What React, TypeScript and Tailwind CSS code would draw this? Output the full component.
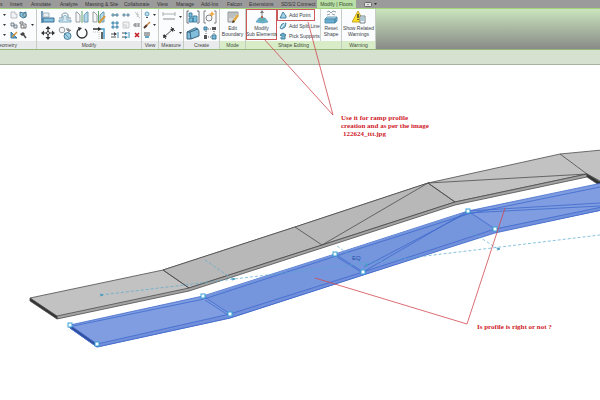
import type { ReactNode } from "react";
import { clsx } from "clsx";

const tabs = [
  { label: "s", width: "w-[10px]" },
  { label: "Insert", width: "w-[21px]" },
  { label: "Annotate", width: "w-[29px]" },
  { label: "Analyze", width: "w-[25px]" },
  { label: "Massing & Site", width: "w-[39px]" },
  { label: "Collaborate", width: "w-[33px]" },
  { label: "View", width: "w-[19px]" },
  { label: "Manage", width: "w-[25px]" },
  { label: "Add-Ins", width: "w-[26px]" },
  { label: "Falcon", width: "w-[22px]" },
  { label: "Extensions", width: "w-[32px]" },
  { label: "SDS/2 Connect", width: "w-[36px]" },
];

function Icon({ size = "lg", children }: { size?: "lg" | "sm"; children: ReactNode }) {
  return (
    <svg
      viewBox={size === "lg" ? "0 0 14 14" : "0 0 8 8"}
      className={clsx("block shrink-0", size === "lg" ? "h-3.5 w-3.5" : "h-2 w-2")}
      fill="none"
      strokeWidth="0.9"
      aria-hidden="true"
    >
      {children}
    </svg>
  );
}

function Tool({ label, children }: { label: string; children: ReactNode }) {
  return (
    <button type="button" aria-label={label} title={label} className="flex items-center justify-center">
      {children}
    </button>
  );
}

function Arrow({ label }: { label: string }) {
  return (
    <Tool label={label}>
      <svg viewBox="0 0 3 2" className="h-0.5 w-[3px]" aria-hidden="true">
        <path d="M0 0h3L1.5 2z" fill="#333" />
      </svg>
    </Tool>
  );
}

function Panel({
  title,
  width,
  green,
  children,
}: {
  title: string;
  width: string;
  green?: boolean;
  children: ReactNode;
}) {
  return (
    <section className={clsx("flex shrink-0 flex-col overflow-hidden border-r border-[#c5cbc5]", width)}>
      <div className="h-8 bg-[#fafcfd]">{children}</div>
      <h2
        className={clsx(
          "flex h-2 items-center justify-center text-[5px] leading-none whitespace-nowrap",
          green ? "bg-[#d7ecc7] text-[#42513b]" : "bg-[#e8eaeb] text-[#444]"
        )}
      >
        {title}
      </h2>
    </section>
  );
}

/* ---------- ribbon panels ---------- */

// scrolled partly out of the window on the left
function GeometryPanel() {
  return (
    <Panel title="Geometry" width="-ml-6 w-[61px]">
      <div className="grid h-full grid-cols-[9px_9px_10px_8px] grid-rows-3 items-center justify-end py-px">
        <Arrow label="Cope options" />
        <Tool label="Cope">
          <Icon size="sm"><path d="M1 1h4v2h2v4H1z" fill="#f2f3f4" stroke="#b3b7ba" /></Icon>
        </Tool>
        <Tool label="Wall opening">
          <Icon size="sm"><path d="m1 1 3 1 3-1v5L4 7 1 5z" fill="#8ec6df" stroke="#3b6d89" /><path d="M4 3h3v2H4z" fill="#fff" stroke="#3b6d89" /></Icon>
        </Tool>
        <span />
        <Arrow label="Cut options" />
        <Tool label="Cut geometry">
          <Icon size="sm"><path d="M1 2h3v3H1zM4 4h3v3H4z" fill="#dce5ea" stroke="#6b7b84" /></Icon>
        </Tool>
        <Tool label="Split face">
          <Icon size="sm"><path d="M1 1h3v2H1zM2 4h3v3H2zM5 3h2v4H5" fill="#fff" stroke="#666" /></Icon>
        </Tool>
        <Arrow label="Split face options" />
        <Arrow label="Join options" />
        <Tool label="Paint">
          <Icon size="sm"><path d="M1 1v6h6z" fill="#5fa6d2" stroke="#306f9a" /><path d="m2 6 5-5" stroke="#db9232" strokeWidth="1.5" /></Icon>
        </Tool>
        <Tool label="Demolish">
          <Icon size="sm"><path d="m1 3 3-2 2 2-3 2z" fill="#444" /><path d="m4 3 3 4" stroke="#444" strokeWidth="1.4" /></Icon>
        </Tool>
      </div>
    </Panel>
  );
}

function ModifyPanel() {
  return (
    <Panel title="Modify" width="w-[105px]">
      <div className="flex h-full items-center gap-0.5 pl-0.5">
        <div className="grid grid-cols-[17px_17px_17px_17px] grid-rows-[16px_16px]">
          <Tool label="Align">
            <Icon><path d="M1 1v12" stroke="#346f98" strokeWidth="1.4" /><path d="M2 3h6v4H2z" fill="#e9f0f4" stroke="#9aabb5" /><path d="M2 8h11v4H2z" fill="#80bfde" stroke="#2f6488" /></Icon>
          </Tool>
          <Tool label="Offset">
            <Icon><path d="M1 8h3V6c-1-4 7-4 6 0v2h3" stroke="#6b8694" /><path d="M1 12h12v-2H9V7c0-2-4-2-4 0v3H1z" fill="#d4e9f2" stroke="#6a9db8" strokeWidth=".8" /></Icon>
          </Tool>
          <Tool label="Mirror - Pick Axis">
            <Icon><path d="M1 2h1l3 3v7H1z" fill="#f8f8f8" stroke="#8a9499" /><path d="M13 2h-1L9 5v7h4z" fill="#b4daea" stroke="#6292aa" /><path d="M7 1v12" stroke="#4c9a55" /></Icon>
          </Tool>
          <Tool label="Mirror - Draw Axis">
            <Icon><path d="M1 2h1l3 3v7H1z" fill="#f8f8f8" stroke="#8a9499" /><path d="M12 2h-1L8 5v7h4z" fill="#b4daea" stroke="#6292aa" /><path d="M6.5 1v12" stroke="#4c9a55" /><path d="m7 13 6-7" stroke="#d59a3d" strokeWidth="2" /></Icon>
          </Tool>
          <Tool label="Move">
            <Icon><path d="M7 2v10M2 7h10" stroke="#343434" strokeWidth="1.2" /><path d="m7 0 2.5 3h-5zM7 14l2.5-3h-5zM0 7l3-2.500v5zM14 7l-3-2.500v5z" fill="#343434" /><circle cx="7" cy="7" r="1.5" fill="#fff" stroke="#343434" /></Icon>
          </Tool>
          <Tool label="Copy">
            <Icon><circle cx="4" cy="4" r="2.8" fill="#f5f5f5" stroke="#87929a" /><circle cx="9.5" cy="10" r="3.5" fill="#9ed0e5" stroke="#3d7593" /><path d="M8 3h3v2m-2-1 2 1.500L13 4" stroke="#555" /><path d="m6 7 6 6" stroke="#5f8ea7" /></Icon>
          </Tool>
          <Tool label="Rotate">
            <Icon><path d="M4 3a5 5 0 1 0 6 0" stroke="#333" strokeWidth="1.3" /><path d="m3 1 4 1-3 3z" fill="#333" /></Icon>
          </Tool>
          <Tool label="Trim/Extend to Corner">
            <Icon><path d="M1 3h6M10 6v7" stroke="#333" strokeWidth="1.5" /><path d="m6 1 4 2-4 2z" fill="#333" /><path d="M12 13V3H9" stroke="#4a9ed0" strokeWidth="1.5" /><path d="M1 6h6v7" stroke="#b8bec1" strokeDasharray="1 1" /></Icon>
          </Tool>
        </div>
        <div className="grid h-full grid-cols-[11px_11px_11px] grid-rows-3 items-center py-px">
          <Tool label="Split Element">
            <Icon size="sm"><path d="M1 3h2v2H1zM5 3h2v2H5zM3 4h2" fill="#a3cee2" stroke="#5e899d" /></Icon>
          </Tool>
          <Tool label="Split with Gap">
            <Icon size="sm"><path d="M1 3h2v2H1zM5 3h2v2H5z" fill="#a3cee2" stroke="#5e899d" /></Icon>
          </Tool>
          <Tool label="Unpin">
            <Icon size="sm"><path d="m2 1 3 3M5 1 3 4m1 0 3 3M4 6l2-3" stroke="#c0c2c3" /></Icon>
          </Tool>
          <Tool label="Array">
            <Icon size="sm"><path d="M1 1h2v2H1zM5 1h2v2H5zM1 5h2v2H1zM5 5h2v2H5z" fill="#a9d6eb" stroke="#397fa5" /></Icon>
          </Tool>
          <Tool label="Scale">
            <Icon size="sm"><path d="M1 1h6v6H1zM1 4h3v3" fill="#f1f1f1" stroke="#c8c8c8" /></Icon>
          </Tool>
          <Tool label="Pin">
            <Icon size="sm"><path d="M2 2v4M6 2v4M2 3h4M2 5h4M0 4h2" stroke="#777" /></Icon>
          </Tool>
          <Tool label="Trim Single">
            <Icon size="sm"><path d="M0 3h4M0 6h5" stroke="#444" /><path d="m3 1 3 2-3 2z" fill="#444" /><path d="M7 1v6" stroke="#3385b0" /></Icon>
          </Tool>
          <Tool label="Trim Multiple">
            <Icon size="sm"><path d="M0 2h4M0 6h4" stroke="#444" /><path d="m3 1 3 1-3 2zM3 5l3 1-3 2z" fill="#3385b0" /><path d="M7 1v6" stroke="#3385b0" /></Icon>
          </Tool>
          <Tool label="Delete">
            <Icon size="sm"><path d="m2 2 4 4m0-4L2 6" stroke="#c3242b" strokeWidth="1.7" /></Icon>
          </Tool>
        </div>
      </div>
    </Panel>
  );
}

function ViewPanel() {
  return (
    <Panel title="View" width="w-[17px]">
      <div className="grid h-full grid-cols-[10px_5px] grid-rows-3 items-center py-px">
        <Tool label="Hide in View">
          <Icon size="sm"><circle cx="4" cy="3" r="2" fill="#bde4f3" stroke="#5796b4" /><path d="M3 6h2v1H3z" fill="#555" /></Icon>
        </Tool>
        <Arrow label="Hide options" />
        <Tool label="Override Graphics">
          <Icon size="sm"><path d="m1 7 3-3" stroke="#553527" strokeWidth="2" /><path d="m4 4 3-3" stroke="#c8873c" strokeWidth="1.5" /></Icon>
        </Tool>
        <Arrow label="Override options" />
        <Tool label="Linework">
          <Icon size="sm"><path d="M1 2h6M1 4h6" stroke="#444" /><path d="M2 6h4" stroke="#3189b2" strokeWidth="1.5" /></Icon>
        </Tool>
      </div>
    </Panel>
  );
}

function MeasurePanel() {
  return (
    <Panel title="Measure" width="w-[25px]">
      <div className="grid h-full grid-cols-[19px_4px] grid-rows-[16px_16px] items-center">
        <Tool label="Aligned Dimension">
          <Icon><path d="M1 4h12M1 2v4M13 2v4" stroke="#a5a8a9" /><path d="M1 9h12" stroke="#c1c5c6" strokeWidth="2" /></Icon>
        </Tool>
        <Arrow label="Measure options" />
        <Tool label="Measure Between Two References">
          <Icon><path d="m2 11 9-8M1 9l3 4M9 1l4 4" stroke="#333" /><path d="m1 12 1-4 3 3zM12 2 8 3l3 3z" fill="#333" /></Icon>
        </Tool>
        <Arrow label="Dimension options" />
      </div>
    </Panel>
  );
}

function CreatePanel() {
  return (
    <Panel title="Create" width="w-[36px]">
      <div className="grid h-full grid-cols-[17px_17px] grid-rows-[16px_16px] items-center justify-center">
        <Tool label="Create Assembly">
          <Icon><path d="M3 1H1v12h2M11 1h2v12h-2" stroke="#59636a" /><path d="M3 3h3v4H3zM3 8h4v4H3zM7 6h4v6H7z" fill="#79bfdc" stroke="#387997" /></Icon>
        </Tool>
        <Tool label="Create Parts">
          <Icon><path d="M3 1H1v12h2M11 1h2v12h-2" stroke="#777" /><circle cx="6" cy="8" r="3" fill="#f8f8f8" stroke="#777" /><path d="m9 1 1 2 2 1-2 1-1 2-1-2-2-1 2-1z" fill="#efad45" /></Icon>
        </Tool>
        <Tool label="Create Group">
          <Icon><path d="m1 6 8-4c3 0 4 2 4 4v4l-8 3H1z" fill="#80bedb" stroke="#315c77" /><path d="M1 6h3l1 7M4 6l8-3" stroke="#315c77" /></Icon>
        </Tool>
        <Tool label="Create Similar">
          <Icon><path d="M1 1h3v3H1zM9 9h4v4H9z" fill="#77bbda" stroke="#376f8f" /><path d="M1 9h3v4H1zM9 1h4v3H9z" fill="#555" /><path d="M5 3h3M3 5v3M5 11h3M11 5v3" stroke="#555" strokeDasharray="1 1" /></Icon>
        </Tool>
      </div>
    </Panel>
  );
}

function LargeButton({ lines, children, marked }: { lines: string[]; children: ReactNode; marked?: boolean }) {
  return (
    <button
      type="button"
      className={clsx(
        "flex h-[31px] w-full flex-col items-center border text-center text-[5px] leading-[6px] whitespace-nowrap text-[#3c4347]",
        marked ? "border-[#cc5a5a]" : "border-transparent"
      )}
    >
      {children}
      <span className="mt-px">
        {lines[0]}
        <br />
        {lines[1]}
      </span>
    </button>
  );
}

function ModePanel() {
  return (
    <Panel title="Mode" width="w-[26px]" green>
      <LargeButton lines={["Edit", "Boundary"]}>
        <Icon><path d="M2 2h10v3L7 12H2z" fill="#d5d8d8" stroke="#888f91" /><path d="M3 3h8M3 5h7M3 7h5" stroke="#9ba0a1" /><path d="m7 12 5-7" stroke="#dfa845" strokeWidth="2.5" /><path d="m6 13 1-3 2 2z" fill="#333" /></Icon>
      </LargeButton>
    </Panel>
  );
}

function SmallButton({ label, marked, children }: { label: string; marked?: boolean; children: ReactNode }) {
  return (
    <button
      type="button"
      className={clsx(
        "flex items-center gap-0.5 border pl-px text-[5px] leading-none whitespace-nowrap text-[#3c4347]",
        marked ? "w-[38px] border-[#cc5a5a]" : "w-full border-transparent"
      )}
    >
      {children}
      {label}
    </button>
  );
}

function ShapeEditingPanel() {
  return (
    <Panel title="Shape Editing" width="w-[96px]" green>
      <div className="flex h-full">
        <div className="w-[31px] shrink-0">
          <LargeButton lines={["Modify", "Sub Elements"]} marked>
            <Icon><path d="M1 12 4 8h6l3 4-5 1z" fill="#67b8d7" stroke="#3d7f9c" strokeWidth=".5" /><path d="m3 10 4-4 4 4-4 2z" fill="#63acb0" /><path d="M7 2v5" stroke="#777" /><path d="m7 0 2 3H5z" fill="#777" /><circle cx="7" cy="7" r="1" fill="#c94c3d" /></Icon>
          </LargeButton>
        </div>
        <div className="grid w-[44px] shrink-0 grid-rows-[12px_10px_10px] border-r border-[#d0d6cf]">
          <SmallButton label="Add Point" marked>
            <Icon size="sm"><path d="m1 7 3-6 3 4v2z" fill="#a3d3e6" stroke="#397998" /></Icon>
          </SmallButton>
          <SmallButton label="Add Split Line">
            <Icon size="sm"><path d="m1 6 2-4 4-1-1 4-3 2z" fill="#8dc5dd" stroke="#397998" /><path d="m2 6 4-5" stroke="#fff" /></Icon>
          </SmallButton>
          <SmallButton label="Pick Supports">
            <Icon size="sm"><path d="m1 3 3-2 3 2-3 2z" fill="#65adca" stroke="#397998" /><path d="M2 5v2h4V4" fill="#7eb6cb" stroke="#397998" /></Icon>
          </SmallButton>
        </div>
        <div className="min-w-0 flex-1">
          <LargeButton lines={["Reset", "Shape"]}>
            <Icon><path d="m1 9 2-2h10l-2 2z" fill="#b9ddec" stroke="#6499b3" /><path d="M1 9h10v4H1zM11 9l2-2v4l-2 2z" fill="#68add0" stroke="#4d8cac" /><path d="m3 2 2-1 2 2 2-2 3 1M3 5l3-1m2 0 3 1" stroke="#8797a0" /></Icon>
          </LargeButton>
        </div>
      </div>
    </Panel>
  );
}

function WarningPanel() {
  return (
    <Panel title="Warning" width="w-[34px]" green>
      <LargeButton lines={["Show Related", "Warnings"]}>
        <Icon><path d="m6 1 6 11H0z" fill="#ffdf24" stroke="#bda02a" /><path d="M6 4v4M6 9v1" stroke="#333" strokeWidth="1.4" /><path d="M8 6h5v7H8z" fill="#f8f9fa" stroke="#687780" /><path d="M9 8h3m-3 2h3" stroke="#4b91b2" /></Icon>
      </LargeButton>
    </Panel>
  );
}

/* ---------- drawing area ---------- */

const selectedPoints = [
  [70, 325],
  [97, 344],
  [203, 296],
  [230, 314],
  [335, 254],
  [363, 272],
  [468, 211],
  [495, 229],
];

function Drawing() {
  return (
    <svg
      viewBox="0 65 600 335"
      className="pointer-events-none relative z-10 block h-auto w-full overflow-visible"
      role="img"
      aria-label="Two sloped ramps in a 3D view"
    >
      {/* upper ramp */}
      <g stroke="#4c4c4c" strokeWidth="0.8" strokeLinejoin="round">
        <path d="m30 298 133-28 132-43 133-44 132-29 42-4v32l-15-8-132 28-133 44-133 43-132 29Z" fill="#c2c2c2" />
        <path d="m163 270 132-43 133-44 27 19-133 43-133 43Z" fill="#b8b8b8" />
        <path d="m57 316 132-28 133-43 133-43 132-28v3l-132 28-133 43-133 43-132 28Z" fill="#a4a4a4" />
        <path d="m30 298 27 18v3l-27-18Z" fill="#333" />
        <path d="m587 174 15 9v4l-15-10Z" fill="#333" />
        <path d="m163 270 26 18M295 227l27 18M428 183l27 19M560 154l27 20M322 245l106-62 159-9" fill="none" />
      </g>

      {/* selected ramp */}
      <g stroke="#3f69cd" strokeWidth="0.8">
        <path d="m70 325 133-29 132-42 133-43 134-28v27l-107 22-132 43-133 43-133 29-27-19Z" fill="#7f9de0" />
        <path d="m203 296 132-42 133-43 27 18-132 43-133 42Z" fill="#7595dc" stroke="none" />
        <path d="m97 344 133-30 133-42 132-43 107-22v3l-107 23-132 42-133 43-133 29Z" fill="#718fda" />
        <path d="m70 325 27 19v3l-27-19Z" fill="#334f9c" />
        <path
          d="m73 326 131-27 132-43 132-42 132-27M203 296l27 18M335 254l28 18M468 211l27 18M205 300l23 15M337 257l24 15M363 272l105-61 132-8M364 267l103-54 133-7"
          fill="none"
        />
      </g>

      {/* reference lines */}
      <g fill="none" stroke="#55a9d0" strokeWidth="0.7" strokeDasharray="3 2">
        <path d="m101 295 499-60M205 260l29 20M337 246l29 20M470 231l28 18" />
      </g>
      <path d="m100 294 3 1-3 1M232 278l3 1-3 1M365 264l3 1-3 1M497 248l3 1-3 1" fill="none" stroke="#4a9cbf" />
      <g fill="#f5feff" stroke="#3b9fd3">
        {selectedPoints.map(([x, y]) => (
          <rect key={`${x}-${y}`} x={x - 2} y={y - 2} width="4" height="4" />
        ))}
      </g>
      <text x="352" y="260" fill="#234eae" className="font-['Liberation_Sans',sans-serif] text-[6px]">EQ</text>

      {/* review notes */}
      <path d="m264 39 69 76-25-93M315 278l152 46 38-116" fill="none" stroke="#d0494f" strokeWidth="0.8" />
      <g fill="#cf2027" className="font-['Liberation_Serif',serif] text-[7px] font-bold">
        <text x="341" y="120">Use it for ramp profile</text>
        <text x="341" y="128">creation and as per the image</text>
        <text x="343" y="136">122624_ttt.jpg</text>
        <text x="477" y="329">Is profile is right or not ?</text>
      </g>
    </svg>
  );
}

export default function App() {
  return (
    <main className="min-h-screen overflow-hidden bg-white font-['Liberation_Sans',sans-serif]">
      <header>
        <nav className="flex h-2 bg-[#9b9b9b] text-[5px] leading-[8px] whitespace-nowrap text-[#333]">
          {tabs.map((tab) => (
            <button key={tab.label} type="button" className={clsx("shrink-0 text-left", tab.width)}>
              {tab.label}
            </button>
          ))}
          <button type="button" className="w-[39px] shrink-0 bg-[#b9dfa7] text-center text-[#344a2c]">
            Modify | Floors
          </button>
          <button type="button" aria-label="Minimize ribbon" className="ml-2 flex items-center gap-0.5">
            <svg viewBox="0 0 8 5" className="h-[5px] w-2" aria-hidden="true">
              <rect x=".5" y=".5" width="7" height="4" rx="1" fill="#e0e2e3" stroke="#666" />
              <path d="m3 3 1-1 1 1z" fill="#444" />
            </svg>
            <svg viewBox="0 0 3 2" className="h-0.5 w-[3px]" aria-hidden="true"><path d="M0 0h3L1.5 2z" fill="#333" /></svg>
          </button>
        </nav>
        <div className="flex border-y border-t-[#a4d47c] border-b-[#93b879] bg-linear-to-b from-[#cae5bd] to-[#898b87]">
          <GeometryPanel />
          <ModifyPanel />
          <ViewPanel />
          <MeasurePanel />
          <CreatePanel />
          <ModePanel />
          <ShapeEditingPanel />
          <WarningPanel />
        </div>
        <div className="h-[15px] border-b border-[#a8b2a1] bg-[#d7e1d0]" />
      </header>
      <Drawing />
    </main>
  );
}
